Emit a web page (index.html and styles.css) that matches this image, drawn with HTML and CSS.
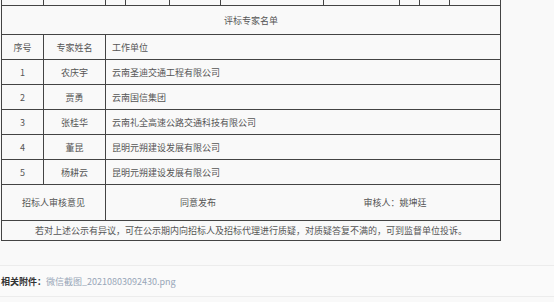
FILE: index.html
```html
<!DOCTYPE html>
<html lang="zh-CN">
<head>
<meta charset="utf-8">
<title>评标专家名单</title>
<link rel="stylesheet" href="styles.css">
</head>
<body>
<div class="content">
  <table class="grid">
    <colgroup>
      <col class="c42"><col class="c62"><col class="c20"><col class="c44"><col class="c51">
      <col class="c103"><col class="c76"><col class="c20"><col class="c30"><col class="c51">
    </colgroup>
    <tr class="cut">
      <td></td><td></td><td></td><td></td><td></td><td></td><td class="soft"></td><td class="soft"></td><td></td><td></td>
    </tr>
    <tr class="title">
      <td colspan="10">评标专家名单</td>
    </tr>
    <tr class="row">
      <td>序号</td><td>专家姓名</td><td colspan="8" class="left">工作单位</td>
    </tr>
    <tr class="row">
      <td>1</td><td>农庆宇</td><td colspan="8" class="left">云南圣迪交通工程有限公司</td>
    </tr>
    <tr class="row">
      <td>2</td><td>贾勇</td><td colspan="8" class="left">云南国信集团</td>
    </tr>
    <tr class="row">
      <td>3</td><td>张桂华</td><td colspan="8" class="left">云南礼全高速公路交通科技有限公司</td>
    </tr>
    <tr class="row">
      <td>4</td><td>董昆</td><td colspan="8" class="left">昆明元朔建设发展有限公司</td>
    </tr>
    <tr class="row">
      <td>5</td><td>杨耕云</td><td colspan="8" class="left">昆明元朔建设发展有限公司</td>
    </tr>
    <tr class="approve">
      <td colspan="2">招标人审核意见</td>
      <td colspan="8" class="split-cell">
        <div class="split">
          <span class="agree">同意发布</span>
          <span class="reviewer">审核人：姚坤廷</span>
        </div>
      </td>
    </tr>
    <tr class="notice">
      <td colspan="10">若对上述公示有异议，可在公示期内向招标人及招标代理进行质疑，对质疑答复不满的，可到监督单位投诉。</td>
    </tr>
  </table>

  <div class="attach">
    <span class="label">相关附件：</span><a class="file" href="#">微信截图_20210803092430.png</a>
  </div>
</div>
</body>
</html>
```

FILE: styles.css
```css
html, body {
  margin: 0;
  padding: 0;
  background: #f9f9f9;
}
body {
  font-family: "Noto Sans CJK SC", "Noto Sans", sans-serif;
  font-size: 9px;
  color: #555;
  overflow: hidden;
}
.content {
  padding-left: 1px;
}
.grid {
  border-collapse: collapse;
  table-layout: fixed;
  width: 500px;
}
.c42 { width: 42px; }
.c62 { width: 62px; }
.c20 { width: 20px; }
.c44 { width: 44px; }
.c51 { width: 51px; }
.c103 { width: 103px; }
.c76 { width: 76px; }
.c30 { width: 30px; }

.grid td {
  border: 1px solid #444;
  padding: 0;
  text-align: center;
  vertical-align: middle;
  line-height: 13px;
}
.grid td.left {
  text-align: left;
  padding-left: 6px;
}
.cut td {
  border-top: none;
  height: 5px;
}
.cut td.soft {
  border-left-color: #888;
}
.title td { height: 28px; }
.row td { height: 24px; }
.approve td { height: 35px; }
.notice td { height: 19px; }

.grid td.split-cell {
  padding: 0;
}
.split {
  display: flex;
}
.agree {
  width: 184px;
  text-align: center;
}
.reviewer {
  flex: 1;
  text-align: center;
}

.attach {
  margin-top: 24px;
  height: 30px;
  border-top: 1px solid #ececec;
  border-bottom: 1px solid #ececec;
  background: #fafafa;
  display: flex;
  align-items: center;
  padding-left: 1px;
  margin-left: -1px;
  width: 554px;
}
.label {
  font-weight: bold;
  color: #333;
}
.file {
  color: #98a6b8;
  text-decoration: none;
}
```
